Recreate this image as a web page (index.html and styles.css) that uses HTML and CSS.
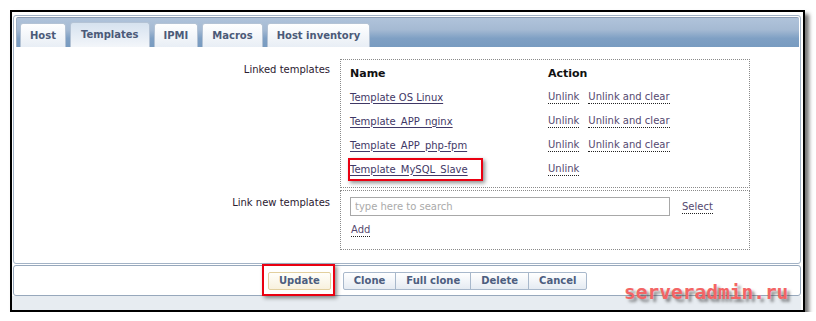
FILE: index.html
```html
<!DOCTYPE html>
<html lang="en">
<head>
    <meta charset="UTF-8">
    <title>Host templates</title>
    <link rel="stylesheet" href="styles.css">
</head>
<body>
    <div class="frame">
        <div class="panel">
            <!-- Tabs -->
            <ul class="tabs">
                <li class="tab">Host</li>
                <li class="tab active">Templates</li>
                <li class="tab">IPMI</li>
                <li class="tab">Macros</li>
                <li class="tab">Host inventory</li>
            </ul>

            <div class="form">
                <div class="form-label">Linked templates</div>
                <div class="box linked">
                    <div class="th">Name</div>
                    <div class="th">Action</div>

                    <div><a class="tpl">Template OS Linux</a></div>
                    <div class="actions"><a class="dot">Unlink</a><a class="dot">Unlink and clear</a></div>

                    <div><a class="tpl wide">Template APP nginx</a></div>
                    <div class="actions"><a class="dot">Unlink</a><a class="dot">Unlink and clear</a></div>

                    <div><a class="tpl wide">Template APP php-fpm</a></div>
                    <div class="actions"><a class="dot">Unlink</a><a class="dot">Unlink and clear</a></div>

                    <div><a class="tpl wide marked mark-tpl">Template MySQL Slave</a></div>
                    <div class="actions"><a class="dot">Unlink</a></div>
                </div>

                <div class="form-label second">Link new templates</div>
                <div class="box new">
                    <div class="search-row">
                        <input class="search" type="text" placeholder="type here to search">
                        <a class="dot">Select</a>
                    </div>
                    <a class="dot add">Add</a>
                </div>
            </div>
        </div>

        <!-- Buttons -->
        <div class="footer">
            <span class="marked mark-btn"><button class="btn btn-main">Update</button></span>
            <div class="btn-group">
                <button class="btn">Clone</button>
                <button class="btn">Full clone</button>
                <button class="btn">Delete</button>
                <button class="btn">Cancel</button>
            </div>
        </div>
        <div class="bottom"></div>

        <div class="watermark">serveradmin.ru</div>
    </div>
</body>
</html>
```

FILE: styles.css
```css
/* General */
body {
    margin: 0;
    background: #ffffff;
    font-family: "DejaVu Sans", Verdana, sans-serif;
    font-size: 10px;
    color: #222;
}

.frame {
    position: relative;
    margin: 10px 0 0 10px;
    width: 791px;
    border: 2px solid #000;
    background: #fff;
    box-shadow: 4px 4px 4px rgba(0, 0, 0, 0.55);
}

.panel {
    margin: 3px 2px 0 1px;
    border: 1px solid #a3b3c6;
    border-radius: 3px;
    background: #fff;
}

/* Tabs */
.tabs {
    list-style: none;
    margin: 1px 1px 0 2px;
    padding: 5px 0 0 3px;
    height: 24px;
    display: flex;
    align-items: flex-end;
    gap: 4px;
    border-top: 1px solid #8a9bb3;
    border-left: 1px solid #9fb0c5;
    border-radius: 2px 2px 0 0;
    background: linear-gradient(#b0c3da 0%, #a5bad3 40%, #7fa0c4 70%, #789bc0 100%);
}

.tab {
    height: 23px;
    line-height: 23px;
    padding: 0 9px;
    border: 1px solid #b4c3d5;
    border-bottom: none;
    border-radius: 3px 3px 0 0;
    background: linear-gradient(#ffffff, #e8eef5);
    color: #4b5a78;
    font-weight: bold;
}

.tab.active {
    height: 24px;
    padding: 0 10px;
    background: linear-gradient(#d6e2ef, #f3f6fa);
}

/* Form */
.form {
    display: grid;
    grid-template-columns: 316px 410px;
    column-gap: 10px;
    row-gap: 2px;
    padding: 12px 0 13px 0;
}

.form-label {
    text-align: right;
    padding-top: 4px;
    line-height: 14px;
    color: #2b2030;
}

.form-label.second {
    padding-top: 6px;
}

.box {
    border: 1px dotted #8a8a8a;
    padding: 0 9px;
}

.linked {
    display: grid;
    grid-template-columns: 198px auto;
    grid-auto-rows: 24px;
    align-items: center;
    padding-top: 1px;
    padding-bottom: 6px;
}

.th {
    font-size: 11px;
    font-weight: bold;
    color: #111;
}

a {
    cursor: pointer;
}

.tpl {
    color: #3f3866;
    text-decoration: underline;
    text-underline-offset: 2px;
}

.tpl.wide {
    word-spacing: 2px;
}

.dot {
    color: #55496f;
    border-bottom: 1px dotted #222;
    line-height: 13px;
}

.actions {
    display: flex;
    gap: 9px;
}

.new {
    padding-top: 6px;
    padding-bottom: 12px;
}

.search-row {
    display: flex;
    align-items: center;
    gap: 12px;
}

.search {
    box-sizing: border-box;
    width: 320px;
    height: 19px;
    margin: 0;
    padding: 0 4px;
    border: 1px solid #a8a8a8;
    font-family: "DejaVu Sans", Verdana, sans-serif;
    font-size: 10px;
}

.search::placeholder {
    color: #aaa;
}

.add {
    display: inline-block;
    margin: 7px 0 0 1px;
    line-height: 13px;
}

/* Red highlight marks */
.marked {
    position: relative;
    display: inline-block;
}

.marked::after {
    content: "";
    position: absolute;
    border: 2px solid #ea0011;
    box-shadow: 2px 2px 4px rgba(0, 0, 0, 0.45);
}

.mark-tpl::after {
    top: -6px;
    bottom: -6px;
    left: -2px;
    right: -15px;
}

.mark-btn::after {
    top: -8px;
    bottom: -6px;
    left: -6px;
    right: -4px;
}

/* Footer buttons */
.footer {
    margin: 1px 2px 0 1px;
    height: 29px;
    border: 1px solid #97a8bc;
    border-radius: 3px;
    display: flex;
    align-items: center;
    padding-left: 254px;
    background: #fff;
}

.btn {
    height: 18px;
    margin: 0;
    padding: 0 9px;
    border: 1px solid #a8b8cb;
    border-radius: 2px;
    background: linear-gradient(#ffffff, #e5ebf2);
    color: #4d5e7f;
    font-family: "DejaVu Sans", Verdana, sans-serif;
    font-size: 10px;
    font-weight: bold;
    line-height: 16px;
}

.btn-main {
    padding: 0 10px;
    border-color: #e2cf9e;
    background: linear-gradient(#fffefa, #f8f1de);
    display: block;
}

.btn-group {
    display: flex;
    margin-left: 13px;
}

.btn-group .btn {
    border-radius: 0;
    margin-left: -1px;
    padding: 0 10px;
}

.btn-group .btn:first-child {
    border-radius: 2px 0 0 2px;
}

.btn-group .btn:last-child {
    border-radius: 0 2px 2px 0;
}

.bottom {
    height: 14px;
    margin-right: 2px;
    background: #e7ecf1;
}

.watermark {
    position: absolute;
    left: 612px;
    top: 271px;
    font-family: "DejaVu Sans Mono", monospace;
    font-size: 19.5px;
    font-weight: bold;
    line-height: 20px;
    color: #f36565;
    text-shadow: 3px 3px 3px rgba(50, 50, 50, 0.55);
}
```
